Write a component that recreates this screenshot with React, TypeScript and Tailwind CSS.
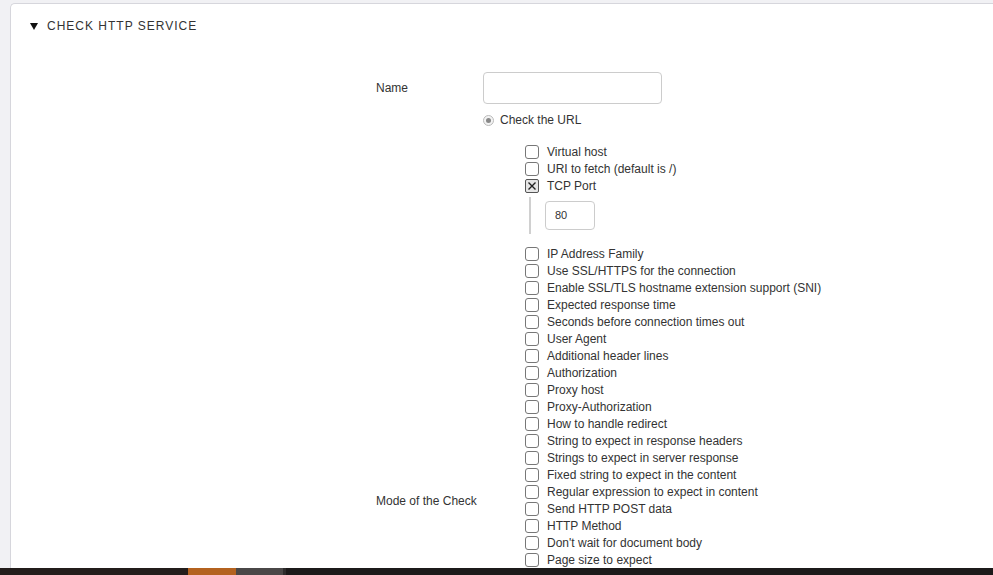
import React from "react";

const topOptions = [
	{ label: "Virtual host", checked: false },
	{ label: "URI to fetch (default is /)", checked: false },
	{ label: "TCP Port", checked: true },
];

const moreOptions = [
	"IP Address Family",
	"Use SSL/HTTPS for the connection",
	"Enable SSL/TLS hostname extension support (SNI)",
	"Expected response time",
	"Seconds before connection times out",
	"User Agent",
	"Additional header lines",
	"Authorization",
	"Proxy host",
	"Proxy-Authorization",
	"How to handle redirect",
	"String to expect in response headers",
	"Strings to expect in server response",
	"Fixed string to expect in the content",
	"Regular expression to expect in content",
	"Send HTTP POST data",
	"HTTP Method",
	"Don't wait for document body",
	"Page size to expect",
];

function Checkbox({ checked }: { checked: boolean }) {
	return (
		<span
			className={
				checked
					? "flex h-[14px] w-[14px] shrink-0 items-center justify-center rounded-[2px] border border-[#555] bg-[#e6e6e6]"
					: "flex h-[14px] w-[14px] shrink-0 items-center justify-center rounded-[3px] border border-[#777] bg-white"
			}
		>
			{checked && (
				<svg width="10" height="10" viewBox="0 0 10 10">
					<path d="M1.5 1.5 L8.5 8.5 M8.5 1.5 L1.5 8.5" stroke="#222" strokeWidth="1.4" />
				</svg>
			)}
		</span>
	);
}

function OptionRow({ label, checked }: { label: string; checked: boolean }) {
	return (
		<div className="flex h-[17px] items-center gap-[8px]">
			<Checkbox checked={checked} />
			<span className="text-[12px] text-[#333]">{label}</span>
		</div>
	);
}

export default function App() {
	return (
		<div className="flex h-[575px] w-[993px] flex-col overflow-hidden bg-[#f1f1f4] font-['Liberation_Sans',Arial,sans-serif]">
			<div className="flex-1 overflow-hidden pl-[10px] pt-[3px]">
				<div className="h-full rounded-tl-[5px] border-l border-t border-[#d6d6dc] bg-white">
					<div className="flex items-center gap-[9px] pl-[19px] pt-[13px]">
						<svg width="8" height="7" viewBox="0 0 8 7">
							<path d="M0 0 H8 L4 7 Z" fill="#111" />
						</svg>
						<span className="text-[12px] tracking-[1px] text-[#333]">CHECK HTTP SERVICE</span>
					</div>

					<div className="ml-[365px] mt-[37px]">
						<div className="flex items-center">
							<span className="w-[107px] text-[12px] text-[#333]">Name</span>
							<input
								type="text"
								className="h-[32px] w-[179px] rounded-[4px] border border-[#ccc] bg-white px-2 text-[12px] outline-none"
							/>
						</div>

						<div className="flex items-start">
							<span className="mt-[388px] w-[107px] text-[12px] text-[#333]">Mode of the Check</span>
							<div className="pt-[8px]">
								<div className="flex h-[16px] items-center gap-[6px]">
									<span className="flex h-[11px] w-[11px] items-center justify-center rounded-full border border-[#bbb] bg-[#f3f3f3]">
										<span className="h-[5px] w-[5px] rounded-full bg-[#888]" />
									</span>
									<span className="text-[12px] text-[#333]">Check the URL</span>
								</div>

								<div className="ml-[42px] mt-[15px]">
									{topOptions.map((o) => (
										<OptionRow key={o.label} label={o.label} checked={o.checked} />
									))}
									<div className="mb-[11px] ml-[4px] mt-[3px] border-l-2 border-[#d0d0d0] py-[4px] pl-[14px]">
										<div className="flex h-[29px] w-[50px] items-center rounded-[4px] border border-[#ccc] pl-[9px] text-[11px] text-[#333]">
											80
										</div>
									</div>
									{moreOptions.map((o) => (
										<OptionRow key={o} label={o} checked={false} />
									))}
								</div>
							</div>
						</div>
					</div>
				</div>
			</div>

			<div className="flex h-[7px] shrink-0 bg-[#1c1a1a]">
				<div className="w-[188px] bg-[#231d1b]" />
				<div className="w-[48px] bg-[#b4621f]" />
				<div className="w-[47px] bg-[#4a4747]" />
				<div className="w-[3px] bg-[#2e2c2c]" />
				<div className="flex-1" />
			</div>
		</div>
	);
}
